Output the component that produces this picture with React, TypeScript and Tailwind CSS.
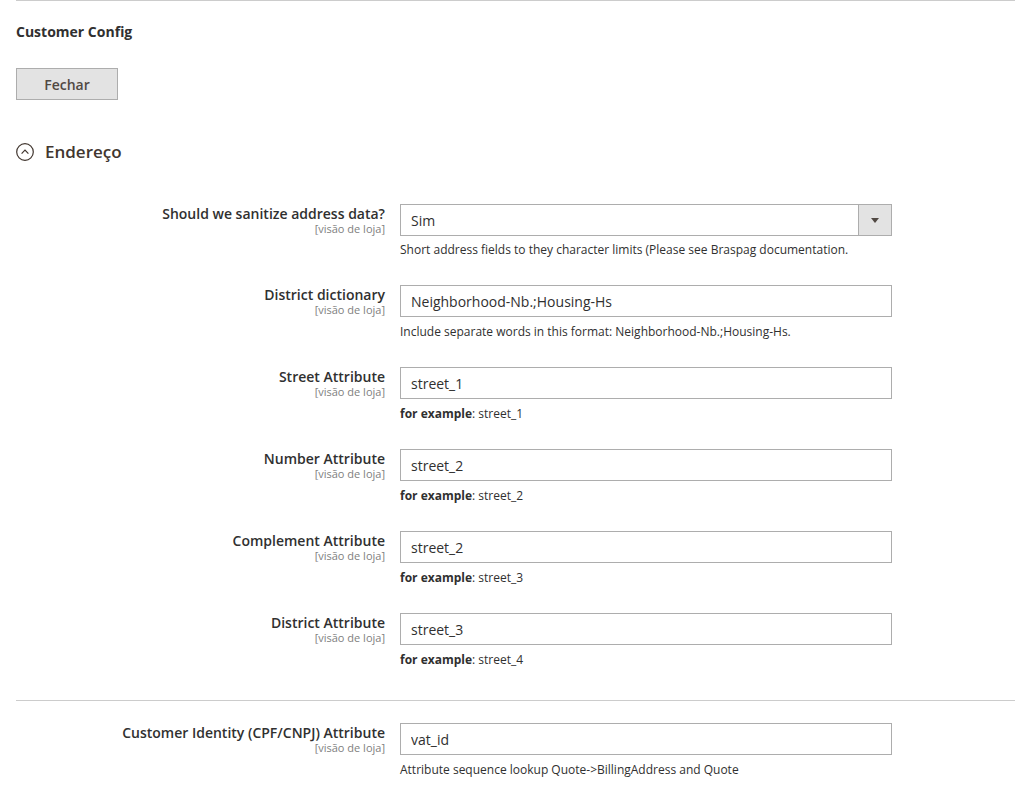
import React from 'react';

type Field = {
  label: string;
  value: string;
  note: React.ReactNode;
  select?: boolean;
};

const ADDRESS_FIELDS: Field[] = [
  {
    label: 'Should we sanitize address data?',
    value: 'Sim',
    select: true,
    note: 'Short address fields to they character limits (Please see Braspag documentation.',
  },
  {
    label: 'District dictionary',
    value: 'Neighborhood-Nb.;Housing-Hs',
    note: 'Include separate words in this format: Neighborhood-Nb.;Housing-Hs.',
  },
  {
    label: 'Street Attribute',
    value: 'street_1',
    note: (
      <>
        <b className="font-bold">for example</b>: street_1
      </>
    ),
  },
  {
    label: 'Number Attribute',
    value: 'street_2',
    note: (
      <>
        <b className="font-bold">for example</b>: street_2
      </>
    ),
  },
  {
    label: 'Complement Attribute',
    value: 'street_2',
    note: (
      <>
        <b className="font-bold">for example</b>: street_3
      </>
    ),
  },
  {
    label: 'District Attribute',
    value: 'street_3',
    note: (
      <>
        <b className="font-bold">for example</b>: street_4
      </>
    ),
  },
];

const FieldRow = ({ field }: { field: Field }) => (
  <div className="flex">
    <div className="w-[384px] pt-px pr-[15px] text-right">
      <div className="text-[14px] font-semibold leading-[18px] text-[#303030]">{field.label}</div>
      <div className="text-[11px] leading-[12px] text-[#808080]">[visão de loja]</div>
    </div>
    <div className="w-[492px]">
      {field.select ? (
        <div className="flex h-8 border border-[#adadad] bg-white">
          <div className="flex-1 pt-px pl-[10px] text-[14px] leading-[29px] text-[#303030]">
            {field.value}
          </div>
          <div className="flex w-[33px] items-center justify-center border-l border-[#adadad] bg-[#e3e3e3]">
            <svg width="8" height="5" viewBox="0 0 8 5">
              <path d="M0 0h8L4 5z" fill="#514943" />
            </svg>
          </div>
        </div>
      ) : (
        <input
          readOnly
          value={field.value}
          className="block h-8 w-full border border-[#adadad] bg-white px-[10px] text-[14px] text-[#303030] outline-none"
        />
      )}
      <div className={`${field.select ? 'mt-[5px]' : 'mt-[6px]'} text-[12px] leading-[17px] text-[#303030]`}>
        {field.note}
      </div>
    </div>
  </div>
);

export default function App() {
  return (
    <div className="min-h-[807px] bg-white pl-4 font-['Open_Sans',sans-serif] text-[#303030]">
      <div className="border-t border-[#cccccc]" />

      <h2 className="mt-[21px] text-[14px] font-bold leading-[20px] text-[#303030]">Customer Config</h2>

      <button className="mt-[26px] h-8 w-[102px] border border-[#adadad] bg-[#e3e3e3] text-[14px] font-semibold text-[#514943]">
        Fechar
      </button>

      <div className="mt-[40px] flex items-center gap-[11px]">
        <svg width="18" height="18" viewBox="0 0 18 18">
          <circle cx="9" cy="9" r="8.3" fill="none" stroke="#41362f" strokeWidth="1.2" />
          <path d="M5.6 10.6L9 7.2l3.4 3.4" fill="none" stroke="#41362f" strokeWidth="1.2" />
        </svg>
        <span className="text-[17px] font-semibold leading-[24px] text-[#41362f]">Endereço</span>
      </div>

      <div className="mt-[40px] flex flex-col gap-[27px]">
        {ADDRESS_FIELDS.map((f) => (
          <FieldRow key={f.label + f.value} field={f} />
        ))}
      </div>

      <div className="mt-[32px] border-t border-[#cccccc]" />

      <div className="mt-[22px]">
        <FieldRow
          field={{
            label: 'Customer Identity (CPF/CNPJ) Attribute',
            value: 'vat_id',
            note: 'Attribute sequence lookup Quote->BillingAddress and Quote',
          }}
        />
      </div>
    </div>
  );
}
